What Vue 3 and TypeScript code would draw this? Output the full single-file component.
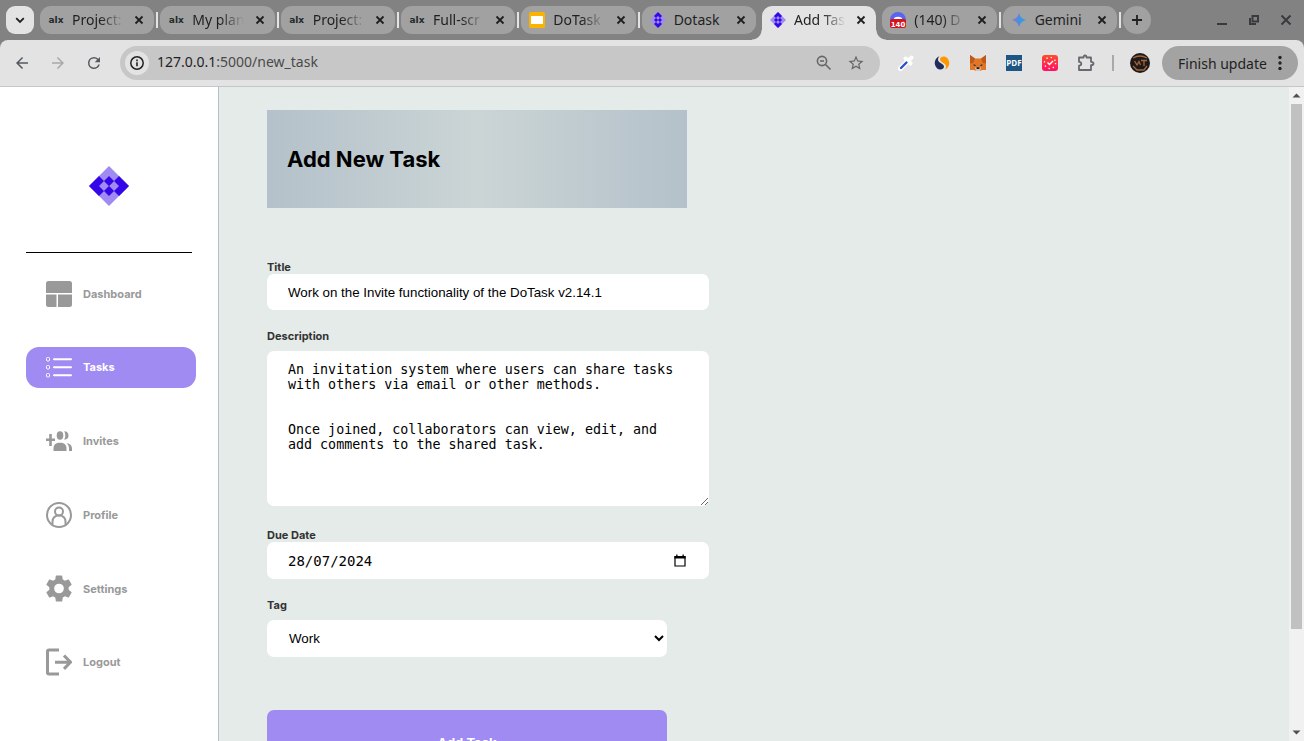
<script setup lang="ts">
import { ref } from 'vue'

interface Tab {
  icon: 'alx' | 'slides' | 'dotask' | 'mail' | 'gemini'
  title: string
  fade: boolean
  active?: boolean
}

interface NavItem {
  icon: string
  label: string
  active?: boolean
}

const tabs: Tab[] = [
  { icon: 'alx', title: 'Project:', fade: true },
  { icon: 'alx', title: 'My plan', fade: true },
  { icon: 'alx', title: 'Project:', fade: true },
  { icon: 'alx', title: 'Full-scr', fade: true },
  { icon: 'slides', title: 'DoTask', fade: true },
  { icon: 'dotask', title: 'Dotask', fade: false },
  { icon: 'dotask', title: 'Add Tas', fade: true, active: true },
  { icon: 'mail', title: '(140) D', fade: true },
  { icon: 'gemini', title: 'Gemini', fade: false },
]

const hideDivider = (i: number): boolean =>
  Boolean(tabs[i].active || tabs[i + 1]?.active)

const nav: NavItem[] = [
  { icon: 'dashboard', label: 'Dashboard' },
  { icon: 'tasks', label: 'Tasks', active: true },
  { icon: 'invites', label: 'Invites' },
  { icon: 'profile', label: 'Profile' },
  { icon: 'settings', label: 'Settings' },
  { icon: 'logout', label: 'Logout' },
]

const title = ref('Work on the Invite functionality of the DoTask v2.14.1')
const description = ref(
  'An invitation system where users can share tasks with others via email or other methods.\n\n\nOnce joined, collaborators can view, edit, and add comments to the shared task.',
)
const dueDate = ref('28/07/2024')
const tag = ref('Work')
</script>

<template>
  <div class="browser">
    <header class="strip">
      <button class="tab-search" aria-label="Search tabs">
        <svg width="12" height="12" viewBox="0 0 12 12"><path d="M2.2 4.2 6 8l3.800-3.800" class="line" /></svg>
      </button>
      <div class="tabs">
        <template v-for="(tab, i) in tabs" :key="i">
          <div class="tab" :class="{ active: tab.active }">
            <span class="favicon">
              <span v-if="tab.icon === 'alx'" class="alx">alx</span>
              <svg v-else-if="tab.icon === 'slides'" width="16" height="16" viewBox="0 0 16 16">
                <rect width="16" height="16" rx="1.500" fill="#f9b300" /><rect x="2" y="4" width="12" height="8" fill="#fff" />
              </svg>
              <svg v-else-if="tab.icon === 'dotask'" width="16" height="16" viewBox="-20 -20 40 40">
                <path d="M0-20 20 0 0 20-20 0z" fill="#a08bf2" />
                <path d="M0-20 10-10 0 0-10-10zM0 20 10 10 0 0-10 10z" fill="#3407e8" />
                <path d="M0-10 5-5 0 0-5-5zM0 10 5 5 0 0-5 5z" fill="#a08bf2" />
                <path d="M-5-5 0 0-5 5-10 0zM5-5 10 0 5 5 0 0z" fill="#3407e8" />
              </svg>
              <svg v-else-if="tab.icon === 'mail'" width="16" height="16" viewBox="0 0 16 16">
                <circle cx="8" cy="8" r="8" fill="#5865f2" />
                <path d="M4 6q4-2.500 8 0v2H4z" fill="#fff" />
                <rect y="7" width="16" height="9" rx="2" fill="#d5141b" />
                <text x="8" y="14.500" text-anchor="middle" class="badge">140</text>
              </svg>
              <svg v-else width="16" height="16" viewBox="0 0 16 16">
                <defs><linearGradient id="gem"><stop offset="0" stop-color="#9a72c8" /><stop offset=".5" stop-color="#4a8de0" /><stop offset="1" stop-color="#1fa5ee" /></linearGradient></defs>
                <path d="M8 1Q9.300 6.700 15 8 9.300 9.300 8 15 6.700 9.300 1 8 6.700 6.700 8 1z" fill="url(#gem)" />
              </svg>
            </span>
            <span class="tab-title" :class="{ fade: tab.fade }">{{ tab.title }}</span>
            <button class="close" :aria-label="`Close ${tab.title}`">
              <svg width="10" height="10" viewBox="0 0 10 10"><path d="m1.500 1.500 7 7m0-7-7 7" class="line" /></svg>
            </button>
          </div>
          <span class="divider" :class="{ hidden: hideDivider(i) }"></span>
        </template>
        <button class="new-tab" aria-label="New tab">
          <svg width="12" height="12" viewBox="0 0 12 12"><path d="M6 1v10M1 6h10" class="line" /></svg>
        </button>
      </div>
      <div class="window-controls">
        <button aria-label="Minimize"><svg width="12" height="12" viewBox="0 0 12 12"><path d="M1 10h10" class="win" /></svg></button>
        <button aria-label="Restore"><svg width="12" height="12" viewBox="0 0 12 12"><path d="M4.500 2H10v5.500H4.500zM2 4v6h6" class="win" /></svg></button>
        <button aria-label="Close window"><svg width="12" height="12" viewBox="0 0 12 12"><path d="m1.500 1.500 9 9m0-9-9 9" class="win" /></svg></button>
      </div>
    </header>

    <div class="toolbar">
      <button class="tool" aria-label="Back">
        <svg width="18" height="18" viewBox="0 0 24 24"><path d="M20 11H7.830l5.590-5.590L12 4l-8 8 8 8 1.410-1.410L7.830 13H20z" fill="#555a60" /></svg>
      </button>
      <button class="tool" aria-label="Forward" disabled>
        <svg width="18" height="18" viewBox="0 0 24 24"><path d="M4 11h12.170l-5.590-5.590L12 4l8 8-8 8-1.410-1.410L16.170 13H4z" fill="#a9a9aa" /></svg>
      </button>
      <button class="tool" aria-label="Reload">
        <svg width="18" height="18" viewBox="0 0 24 24"><path d="M17.650 6.350A7.960 7.960 0 0 0 12 4a8 8 0 1 0 7.730 10h-2.080A6 6 0 1 1 12 6c1.660 0 3.140.690 4.220 1.780L13 11h7V4z" fill="#555a60" /></svg>
      </button>
      <div class="omnibox">
        <button class="site-info" aria-label="Site information">
          <svg width="16" height="16" viewBox="0 0 16 16"><circle cx="8" cy="8" r="6.200" fill="none" stroke="#222" stroke-width="1.500" /><path d="M8 7.200v4M8 4.600v1.600" stroke="#222" stroke-width="1.600" /></svg>
        </button>
        <span class="url"><b>127.0.0.1</b>:5000/new_task</span>
        <button class="omni-btn" aria-label="Zoom">
          <svg width="16" height="16" viewBox="0 0 16 16"><circle cx="6" cy="6" r="4.600" fill="none" stroke="#666" stroke-width="1.600" /><path d="m9.500 9.500 5 5M4 6h4" stroke="#666" stroke-width="1.600" /></svg>
        </button>
        <button class="omni-btn" aria-label="Bookmark">
          <svg width="18" height="18" viewBox="0 0 24 24"><path d="m22 9.240-7.190-.620L12 2 9.190 8.630 2 9.240l5.460 4.730L5.820 21 12 17.270 18.180 21l-1.630-7.030zM12 15.400l-3.760 2.270 1-4.280-3.320-2.880 4.380-.380L12 6.100l1.710 4.040 4.380.380-3.320 2.880 1 4.280z" fill="#666" /></svg>
        </button>
      </div>
      <div class="extensions">
        <button class="tool" aria-label="Color picker">
          <svg width="18" height="18" viewBox="0 0 18 18"><path d="m3.500 14.500 7-7" stroke="#fff" stroke-width="5" stroke-linecap="round" /><path d="m8.500 4.500 5 5M11 7l3.500-3.500" stroke="#fff" stroke-width="4" stroke-linecap="round" /><path d="m4 14 5.500-5.500" stroke="#2b50c8" stroke-width="2.400" stroke-linecap="round" /></svg>
        </button>
        <button class="tool" aria-label="Similar sites">
          <svg width="16" height="16" viewBox="0 0 16 16"><path d="M5.500 1.200A7.200 7.200 0 0 0 3 13.200C6 15.800 10 14.500 10 11.500 10 8.500 4 8 4 4.500 4 3 4.500 2 5.500 1.200z" fill="#1f2c5c" /><path d="M10.500 14.800A7.200 7.200 0 0 0 13 2.800C10 .2 6 1.500 6 4.500c0 3 6 3.500 6 7 0 1.500-.500 2.500-1.500 3.300z" fill="#ff9800" /></svg>
        </button>
        <button class="tool" aria-label="Wallet">
          <svg width="18" height="16" viewBox="0 0 18 16"><path d="m1 0 5 3.500h6L17 0v15h-4l-2 1H7l-2-1H1z" fill="#e27625" /><path d="m1 0 5 3.500L4 8 1 8.500zM17 0l-5 3.500L14 8l3 .500z" fill="#bd5a1c" /><path d="m4.500 9 3 1.500-2.500.500zM13.500 9l-3 1.500 2.500.500z" fill="#233447" /><path d="m6 13 1-1h4l1 1-1 3H7z" fill="#d7c1b3" /><path d="M7.300 12.300h3.400L10.300 14H7.700z" fill="#161616" /></svg>
        </button>
        <button class="tool" aria-label="PDF tools"><span class="pdf">PDF</span></button>
        <button class="tool" aria-label="Clock">
          <svg width="16" height="16" viewBox="0 0 16 16"><defs><linearGradient id="clk" x2="0" y2="1"><stop stop-color="#ff4b2b" /><stop offset="1" stop-color="#ff1066" /></linearGradient></defs><rect width="16" height="16" rx="3" fill="url(#clk)" /><circle cx="8" cy="8" r="5.600" fill="none" stroke="#fff" stroke-width="1.300" stroke-dasharray="1.300 3.100" /><path d="m5.500 7.500 2 2 3.500-3.500" fill="none" stroke="#fff" stroke-width="1.400" /></svg>
        </button>
        <button class="tool" aria-label="Extensions">
          <svg width="18" height="18" viewBox="0 0 18 18"><path d="M2 3.500h4.500q0-2 1.500-2t1.500 2H14v4.300q2.500 0 2.500 1.700T14 11.200V16H2v-4.300q2.300-.300 2.300-2T2 7.800z" fill="none" stroke="#666a70" stroke-width="1.800" stroke-linejoin="round" /></svg>
        </button>
      </div>
      <span class="bar-divider"></span>
      <button class="avatar" aria-label="Profile">
        <svg width="20" height="20" viewBox="0 0 20 20"><circle cx="10" cy="10" r="10" fill="#1c1a1b" /><path d="M3 5q7-4 14 0M4.500 8l2.500 4 2-3.500 1.500 3.500M11 7.500h6M14 7.500V13M3 13l4 4h7l3-4" fill="none" stroke="#a8653a" stroke-width="1.300" /></svg>
      </button>
      <button class="update">Finish update
        <svg width="4" height="16" viewBox="0 0 4 16" fill="#222"><circle cx="2" cy="2.500" r="1.700" /><circle cx="2" cy="8" r="1.700" /><circle cx="2" cy="13.500" r="1.700" /></svg>
      </button>
    </div>

    <div class="page">
      <aside class="sidebar">
        <a href="#" class="logo" aria-label="DoTask">
          <svg width="40" height="40" viewBox="-20 -20 40 40">
            <path d="M0-20 20 0 0 20-20 0z" fill="#a08bf2" />
            <path d="M-20 0-10-10 0 0-10 10zM20 0 10-10 0 0 10 10z" fill="#3407e8" />
            <path d="M-10 0-5-5 0 0-5 5zM10 0 5-5 0 0 5 5z" fill="#a08bf2" />
            <path d="M0-10 5-5 0 0-5-5zM0 10 5 5 0 0-5 5z" fill="#3407e8" />
          </svg>
        </a>
        <hr class="rule" />
        <nav class="nav">
          <a v-for="item in nav" :key="item.label" href="#" class="nav-item" :class="{ active: item.active }">
            <svg width="26" height="28" viewBox="0 0 26 28" fill="currentColor">
              <template v-if="item.icon === 'dashboard'">
                <path d="M2.500 1h21A2.500 2.500 0 0 1 26 3.500V13H0V3.500A2.500 2.500 0 0 1 2.500 1zM0 14.500h10.500V27h-8A2.500 2.500 0 0 1 0 24.500zM12 14.500h14v10a2.500 2.500 0 0 1-2.500 2.500H12z" />
              </template>
              <template v-else-if="item.icon === 'tasks'">
                <path d="M8 6.300h17M8 14.300h17M8 22.300h17" stroke="currentColor" stroke-width="2" stroke-linecap="round" />
                <g fill="none" stroke="currentColor"><rect x=".5" y="4.500" width="3" height="3.500" rx="1" /><rect x=".5" y="12.500" width="3" height="3.500" rx="1" /><rect x=".5" y="20.500" width="3" height="3.500" rx="1" /></g>
              </template>
              <template v-else-if="item.icon === 'invites'">
                <path d="M0 11.500h3.200V7h2.600v4.500H9v2.600H5.800V19H3.200v-4.900H0z" />
                <ellipse cx="14" cy="8.500" rx="3.300" ry="4.200" />
                <path d="M7.500 24v-2.500c0-4 2.500-5.700 6.500-5.700s6.500 1.700 6.500 5.700V24z" />
                <path d="M18.200 4.300c3 0 4.300 2 4.300 4.300s-1.300 4.200-4.300 4.200c1.500-2.500 1.500-6 0-8.500zM20.500 16c3.500.5 5.500 2.500 5.500 5.500V24h-3v-2.500c0-2.500-.800-4-2.500-5.500z" />
              </template>
              <template v-else-if="item.icon === 'profile'">
                <g fill="none" stroke="currentColor" stroke-width="2"><circle cx="13" cy="14" r="12" /><circle cx="13" cy="10.500" r="4" /><path d="M6.500 23.500V21c0-4 2.500-6.500 6.500-6.500s6.500 2.500 6.500 6.500v2.500" /></g>
              </template>
              <template v-else-if="item.icon === 'settings'">
                <path transform="translate(-3.200 -2.700) scale(1.350)" d="M19.140 12.940c.040-.300.060-.610.060-.940s-.020-.640-.070-.940l2.030-1.580a.490.490 0 0 0 .120-.610l-1.920-3.320a.490.490 0 0 0-.590-.220l-2.390.960a7 7 0 0 0-1.620-.940l-.360-2.540a.480.480 0 0 0-.480-.410h-3.840a.480.480 0 0 0-.470.410l-.360 2.540a7.400 7.400 0 0 0-1.620.940l-2.390-.960a.480.480 0 0 0-.590.220L2.740 8.870a.480.480 0 0 0 .120.610l2.030 1.580a5.600 5.600 0 0 0 0 1.880l-2.030 1.580a.490.490 0 0 0-.120.610l1.920 3.320c.120.220.370.290.590.220l2.390-.960c.500.380 1.030.700 1.620.940l.360 2.540c.050.240.240.410.480.410h3.840c.240 0 .440-.170.470-.410l.360-2.540a7 7 0 0 0 1.620-.940l2.390.960c.220.080.470 0 .590-.220l1.920-3.320a.480.480 0 0 0-.120-.610zM12 15.600a3.600 3.600 0 1 1 0-7.200 3.600 3.600 0 0 1 0 7.200z" />
              </template>
              <template v-else>
                <path d="M13 2H3a1.500 1.500 0 0 0-1.500 1.500v21A1.500 1.500 0 0 0 3 26h10" fill="none" stroke="currentColor" stroke-width="3" />
                <path d="M9 14.200h15M18 7.500l6.500 6.700-6.500 6.700" fill="none" stroke="currentColor" stroke-width="3" />
              </template>
            </svg>
            {{ item.label }}
          </a>
        </nav>
      </aside>

      <main class="main">
        <div class="banner"><h1>Add New Task</h1></div>
        <form class="form" @submit.prevent>
          <label for="title">Title</label>
          <input id="title" v-model="title" type="text" class="field" />
          <label for="desc" class="spaced">Description</label>
          <textarea id="desc" v-model="description" class="field"></textarea>
          <label for="due">Due Date</label>
          <div class="field date">
            <input id="due" v-model="dueDate" type="text" />
            <button type="button" aria-label="Open calendar">
              <svg width="12" height="13" viewBox="0 0 12 13"><path d="M1 2.500h10v9.500H1z" fill="none" stroke="#000" stroke-width="1.200" /><path d="M.5 2h11v2.500H.5zM2.200.5h1.300V2H2.200zM8.500.5h1.300V2H8.500z" /></svg>
            </button>
          </div>
          <label for="tag" class="spaced">Tag</label>
          <select id="tag" v-model="tag" class="field"><option>Work</option><option>Personal</option></select>
          <button type="submit" class="submit">Add Task</button>
        </form>
      </main>

      <div class="scrollbar" aria-hidden="true">
        <svg width="15" height="17" viewBox="0 0 15 17"><path d="M3.500 10.500h8l-4-4z" fill="#505050" /></svg>
        <span class="track"><span class="thumb"></span></span>
        <svg width="15" height="17" viewBox="0 0 15 17"><path d="M3.500 6.500h8l-4 4z" fill="#505050" /></svg>
      </div>
    </div>
  </div>
</template>

<style>
body { overflow: hidden; }
</style>

<style scoped>
* { box-sizing: border-box; }
button { border: 0; padding: 0; background: none; font-family: inherit; color: inherit; display: flex; align-items: center; justify-content: center; }
svg { display: block; flex: none; }

.browser { height: 100vh; display: flex; flex-direction: column; background: #828282; color: #1f1f1f; font-family: "Noto Sans", "Open Sans", sans-serif; font-size: 14px; }

.strip { display: flex; height: 40px; padding: 6px 12px 0 6px; gap: 6px; }
.line { fill: none; stroke: #1f1f1f; stroke-width: 1.8; }
.win { fill: none; stroke: #3a3a3e; stroke-width: 2; }
.tab-search { width: 28px; height: 28px; border-radius: 9px; background: #e3e3e3; }
.tabs { flex: 1; display: flex; min-width: 0; }
.tab { position: relative; flex: 1; min-width: 0; height: 28px; display: flex; align-items: center; padding: 0 10px 0 8px; border-radius: 11px; background: #a1a1a1; }
.tab.active { height: 34px; padding-bottom: 6px; border-radius: 10px 10px 0 0; background: #e3e3e3; }
.tab.active::before, .tab.active::after { content: ""; position: absolute; bottom: 0; width: 10px; height: 10px; }
.tab.active::before { right: 100%; background: radial-gradient(circle at 0 0, transparent 9px, #e3e3e3 10px); }
.tab.active::after { left: 100%; background: radial-gradient(circle at 100% 0, transparent 9px, #e3e3e3 10px); }
.favicon { width: 16px; height: 16px; margin-right: 8px; flex: none; display: flex; align-items: center; justify-content: center; }
.alx { font: bold 9px/16px "DejaVu Sans", sans-serif; color: #222b2b; }
.badge { font: bold 7px "DejaVu Sans", sans-serif; fill: #fff; }
.tab-title { flex: 1; min-width: 0; white-space: nowrap; line-height: 20px; }
.tab-title.fade { -webkit-mask-image: linear-gradient(to right, #000 28px, transparent 52px); mask-image: linear-gradient(to right, #000 28px, transparent 52px); }
.close { width: 10px; height: 16px; margin-left: 6px; flex: none; }
.divider { width: 2px; height: 16px; margin: 6px 2px 0; background: #e3e3e3; flex: none; }
.divider.hidden { background: transparent; }
.new-tab { width: 28px; height: 28px; border-radius: 50%; background: #a1a1a1; flex: none; }
.window-controls { display: flex; height: 28px; gap: 20px; margin-left: 59px; }
.window-controls button { width: 12px; }

.toolbar { display: flex; align-items: center; height: 47px; padding: 0 6px 0 4px; background: #e3e3e3; border-bottom: 1px solid #c4c7c7; border-radius: 8px 8px 0 0; }
.tool { width: 36px; height: 34px; flex: none; }
.omnibox { flex: 1; min-width: 0; display: flex; align-items: center; height: 34px; margin: 0 8px; padding: 0 8px 0 5px; border-radius: 17px; background: #c7c7c7; }
.site-info { width: 24px; height: 24px; margin-right: 8px; border-radius: 50%; background: #e3e3e3; flex: none; }
.url { flex: 1; line-height: 20px; padding-bottom: 2px; color: #4a4a4a; }
.url b { font-weight: 400; color: #1f1f1f; }
.omni-btn { width: 32px; height: 32px; }
.extensions { display: flex; }
.pdf { width: 16px; height: 16px; background: #1d5585; color: #fff; font: bold 8px/16px "Open Sans", sans-serif; text-align: center; }
.bar-divider { width: 2px; height: 16px; margin: 0 16px 0 8px; background: #a9a9a9; flex: none; }
.avatar { width: 20px; height: 20px; margin-right: 12px; flex: none; }
.update { width: 136px; height: 34px; gap: 11px; border-radius: 17px; background: #a3a3a3; font-size: 14px; white-space: nowrap; flex: none; }

.page { flex: 1; min-height: 0; display: flex; background: #e5ebe8; font-family: Inter, sans-serif; }
.sidebar { width: 219px; flex: none; display: flex; flex-direction: column; padding-top: 79px; background: #fff; border-right: 1px solid #b4c1ca; }
.logo { align-self: center; }
.rule { height: 1px; margin: 46px 26px 20px; border: 0; background: #000; flex: none; }
.nav { flex: 1; display: flex; flex-direction: column; justify-content: space-between; padding: 0 22px 58px 26px; }
.nav-item { display: flex; align-items: center; gap: 11px; height: 41px; padding-left: 20px; border-radius: 13px; color: #999; font-size: 11px; font-weight: 700; text-decoration: none; }
.nav-item.active { background: #a08bf2; color: #fff; }

.main { flex: 1; min-width: 0; overflow: hidden; padding: 23px 48px 0; }
.banner { display: flex; align-items: center; max-width: 420px; height: 98px; padding: 0 20px; background: linear-gradient(to right, #b4c1ca, #cbd5d6 50%, #b4c1ca); }
h1 { margin: 0; color: #000; font-size: 22px; line-height: 28px; font-weight: 700; }
.form { display: flex; flex-direction: column; max-width: 442px; margin-top: 52px; }
label { color: #333; font-size: 11px; line-height: 14px; font-weight: 700; }
label.spaced { margin-bottom: 8px; }
.field { height: 37px; padding: 0 21px; margin-bottom: 19px; border: 0; border-radius: 7px; background: #fff; color: #000; font-family: "Liberation Sans", Arial, sans-serif; outline: none; }
input.field { height: 36px; }
textarea.field { height: 155px; margin-bottom: 22px; padding: 11px 21px; font-family: "DejaVu Sans Mono", monospace; line-height: 15px; resize: vertical; }
.date { display: flex; align-items: center; }
.date input { flex: 1; min-width: 0; border: 0; padding: 0; outline: none; background: none; color: #000; font-family: "DejaVu Sans Mono", monospace; font-size: 14px; }
.date button { width: 16px; height: 16px; }
select.field { max-width: 400px; padding: 0 0 0 18px; margin-bottom: 53px; }
.submit { max-width: 400px; height: 66px; border-radius: 7px; background: #a08bf2; color: #fff; font-size: 13px; font-weight: 700; flex: none; }

.scrollbar { width: 15px; flex: none; display: flex; flex-direction: column; background: #f1f1f1; }
.track { flex: 1; padding: 0 2px; }
.thumb { display: block; height: calc(100% - 95px); background: #c1c1c1; }
</style>
